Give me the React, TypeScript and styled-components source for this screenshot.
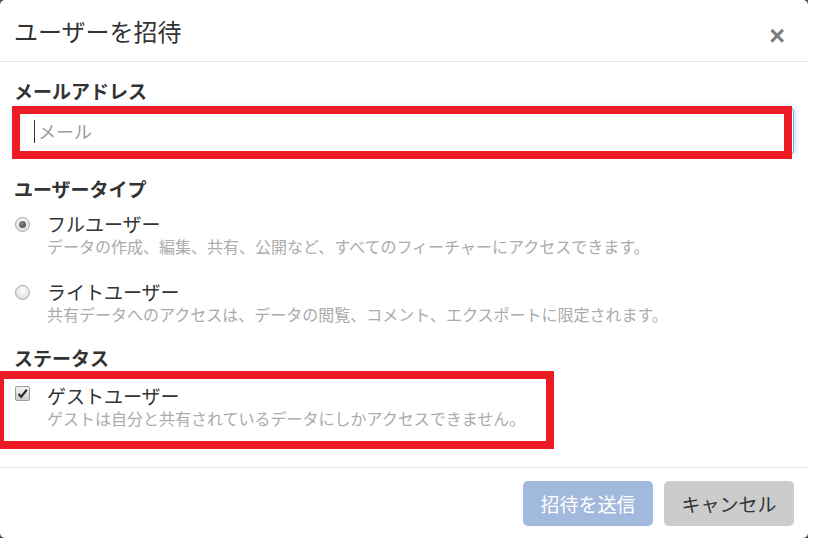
import React from "react";
import styled, { createGlobalStyle } from "styled-components";

const GlobalStyle = createGlobalStyle`
  html, body {
    margin: 0;
    padding: 0;
    background: #ffffff;
  }
  body {
    font-family: "Noto Sans CJK JP", "Noto Sans", sans-serif;
    color: #333333;
  }
`;

const Backdrop = styled.div`
  width: 808px;
  height: 538px;
  background: #4a4a4a;
`;

const Modal = styled.div`
  position: relative;
  height: 100%;
  background: #ffffff;
  border-radius: 5px;
  display: flex;
  flex-direction: column;
`;

const Header = styled.div`
  height: 61px;
  padding: 0 14px;
  border-bottom: 1px solid #e5e5e5;
  display: flex;
  justify-content: space-between;
  align-items: center;
`;

const Title = styled.h4`
  margin: 0;
  font-size: 24px;
  font-weight: 400;
  line-height: 30px;
  color: #333333;
`;

const Close = styled.button`
  margin-top: 10px;
  margin-right: 9px;
  padding: 0;
  border: 0;
  background: none;
  font-family: "Liberation Sans", Arial, sans-serif;
  font-size: 27px;
  font-weight: 700;
  line-height: 20px;
  color: #7d7d7d;
  cursor: pointer;
`;

const Body = styled.div`
  flex: 1;
  padding: 18px 14px 0;
  display: flex;
  flex-direction: column;
`;

const Heading = styled.div<{ $gap?: number }>`
  margin-top: ${(p) => p.$gap ?? 0}px;
  font-size: 19px;
  font-weight: 700;
  line-height: 22px;
  color: #333333;
`;

const Field = styled.div`
  margin-top: 6px;
  height: 46px;
  box-sizing: border-box;
  padding-left: 19px;
  border: 1px solid #66afe9;
  border-radius: 3px;
  box-shadow: 0 0 6px rgba(102, 175, 233, 0.6);
  display: flex;
  align-items: center;
  gap: 3px;
`;

const Caret = styled.span`
  width: 1px;
  height: 23px;
  background: #333333;
`;

const Placeholder = styled.span`
  font-size: 18px;
  color: #a0a0a0;
`;

const Option = styled.div<{ $gap: number }>`
  margin-top: ${(p) => p.$gap}px;
  display: flex;
  gap: 17px;
  padding-left: 1px;
`;

const Radio = styled.span<{ $checked?: boolean }>`
  margin-top: 3px;
  flex: none;
  width: 15px;
  height: 15px;
  box-sizing: border-box;
  border-radius: 50%;
  border: 1px solid #a9a9a9;
  background: radial-gradient(circle at 50% 35%, #ffffff 0%, #e6e6e6 60%, #d2d2d2 100%);
  display: flex;
  align-items: center;
  justify-content: center;
  &::after {
    content: "";
    display: ${(p) => (p.$checked ? "block" : "none")};
    width: 7px;
    height: 7px;
    border-radius: 50%;
    background: radial-gradient(circle at 40% 35%, #8a8a8a, #3f3f3f);
  }
`;

const Check = styled.span`
  margin-top: 0;
  flex: none;
  width: 15px;
  height: 15px;
  box-sizing: border-box;
  border-radius: 2px;
  border: 1px solid #9c9c9c;
  background: linear-gradient(#f2f2f2, #cfcfcf);
  display: flex;
  align-items: center;
  justify-content: center;
`;

const OptionText = styled.div`
  display: flex;
  flex-direction: column;
  font-family: "Liberation Sans", "Noto Sans CJK JP", sans-serif;
`;

const OptionLabel = styled.div`
  font-size: 19px;
  line-height: 24px;
  color: #333333;
`;

const OptionDesc = styled.div`
  font-size: 16px;
  line-height: 20px;
  color: #ababab;
`;

const Footer = styled.div`
  border-top: 1px solid #e5e5e5;
  padding: 13px 14px 12px;
  display: flex;
  justify-content: flex-end;
  gap: 11px;
`;

const Button = styled.button<{ $primary?: boolean }>`
  width: 130px;
  height: 45px;
  border: 0;
  border-radius: 5px;
  font-family: "Noto Sans CJK JP", sans-serif;
  font-size: 19px;
  background: ${(p) => (p.$primary ? "#a2b9de" : "#cccccc")};
  color: ${(p) => (p.$primary ? "#ffffff" : "#333333")};
`;

const Mark = styled.div<{ $left: number; $top: number; $width: number; $height: number }>`
  position: absolute;
  left: ${(p) => p.$left}px;
  top: ${(p) => p.$top}px;
  width: ${(p) => p.$width}px;
  height: ${(p) => p.$height}px;
  box-sizing: border-box;
  border: 8px solid #ed1c24;
  pointer-events: none;
`;

const USER_TYPES = [
  {
    id: "full",
    label: "フルユーザー",
    desc: "データの作成、編集、共有、公開など、すべてのフィーチャーにアクセスできます。",
    checked: true,
    gap: 14,
  },
  {
    id: "light",
    label: "ライトユーザー",
    desc: "共有データへのアクセスは、データの閲覧、コメント、エクスポートに限定されます。",
    checked: false,
    gap: 24,
  },
];

export default function App() {
  return (
    <>
      <GlobalStyle />
      <Backdrop>
        <Modal>
          <Header>
            <Title>ユーザーを招待</Title>
            <Close>×</Close>
          </Header>
          <Body>
            <Heading>メールアドレス</Heading>
            <Field>
              <Caret />
              <Placeholder>メール</Placeholder>
            </Field>
            <Heading $gap={24}>ユーザータイプ</Heading>
            {USER_TYPES.map((item) => (
              <Option key={item.id} $gap={item.gap}>
                <Radio $checked={item.checked} />
                <OptionText>
                  <OptionLabel>{item.label}</OptionLabel>
                  <OptionDesc>{item.desc}</OptionDesc>
                </OptionText>
              </Option>
            ))}
            <Heading $gap={21}>ステータス</Heading>
            <Option $gap={17}>
              <Check>
                <svg width="11" height="11" viewBox="0 0 11 11">
                  <path d="M1.5 6 L4.2 8.8 L9.8 1.8" fill="none" stroke="#2e2e2e" strokeWidth="2.2" />
                </svg>
              </Check>
              <OptionText>
                <OptionLabel>ゲストユーザー</OptionLabel>
                <OptionDesc>ゲストは自分と共有されているデータにしかアクセスできません。</OptionDesc>
              </OptionText>
            </Option>
          </Body>
          <Footer>
            <Button $primary>招待を送信</Button>
            <Button>キャンセル</Button>
          </Footer>
          <Mark $left={12} $top={106} $width={780} $height={53} />
          <Mark $left={-4} $top={371} $width={558} $height={78} />
        </Modal>
      </Backdrop>
    </>
  );
}
